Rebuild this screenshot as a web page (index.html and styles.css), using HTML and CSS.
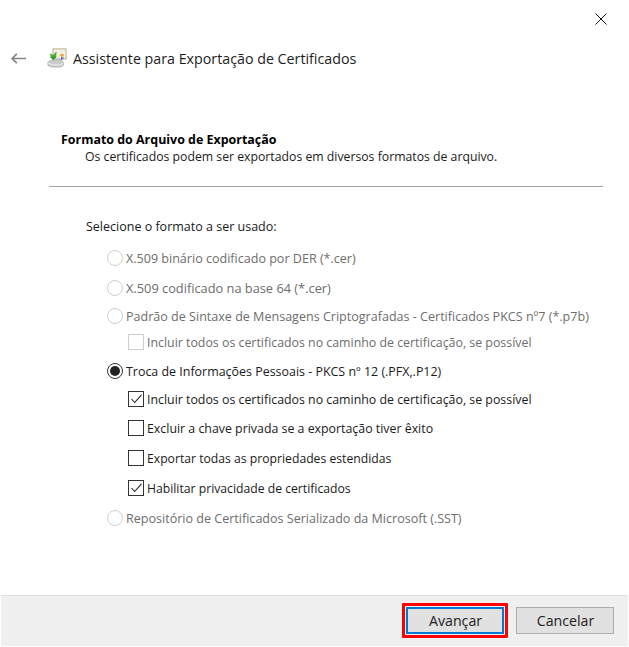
FILE: index.html
```html
<!DOCTYPE html>
<html lang="pt">
<head>
<meta charset="utf-8">
<title>Assistente para Exportação de Certificados</title>
<link rel="stylesheet" href="styles.css">
</head>
<body>
<div class="window">
  <div class="topbar">
    <svg class="close" width="14" height="14" viewBox="0 0 14 14"><path d="M1.5 1.5l11 11M12.5 1.5l-11 11" stroke="#111" stroke-width="1" fill="none"/></svg>
  </div>
  <div class="titlebar">
    <svg class="back" width="15" height="11" viewBox="0 0 15 11"><path d="M15 5.5H1.2M5.8 .8L1.2 5.5l4.6 4.7" stroke="#858585" stroke-width="1.7" fill="none"/></svg>
    <svg class="appicon" width="20" height="20" viewBox="0 0 22 22">
      <rect x="6.5" y="1" width="14.5" height="11" fill="#f4efe4" stroke="#b5a88f"/>
      <circle cx="16.5" cy="8" r="2" fill="#e8a93a"/>
      <path d="M15.5 10h1v3h-1zM17 10h1v3h-1z" fill="#3a62b8"/>
      <path d="M1 15.5L6 13h9l3 2.5v3.5L15 21H5l-4-2z" fill="#c9cdca" stroke="#8e9492" stroke-width=".6"/>
      <path d="M1 16.5l5 2.2h9l3-2.2" fill="none" stroke="#f2f4f3"/>
      <path d="M10.5 3.5L6.5 8 4.5 6 3 7.5 4.5 9 3 10.5h7z" fill="#45b02f"/>
      <path d="M3.5 9.5l3.5 4 3.5-4z" fill="#2f9a24"/>
    </svg>
    <h1 class="title">Assistente para Exportação de Certificados</h1>
  </div>
  <div class="head">
    <h2 class="head-title">Formato do Arquivo de Exportação</h2>
    <p class="head-sub">Os certificados podem ser exportados em diversos formatos de arquivo.</p>
  </div>
  <hr class="divider">
  <main class="content">
    <p class="prompt">Selecione o formato a ser usado:</p>
    <div class="options">
      <div class="row off"><span class="radio"></span><span>X.509 binário codificado por DER (*.cer)</span></div>
      <div class="row off"><span class="radio"></span><span>X.509 codificado na base 64 (*.cer)</span></div>
      <div class="row off"><span class="radio"></span><span>Padrão de Sintaxe de Mensagens Criptografadas - Certificados PKCS nº7 (*.p7b)</span></div>
      <div class="row off sub"><span class="check"></span><span>Incluir todos os certificados no caminho de certificação, se possível</span></div>
      <div class="row"><span class="radio on"></span><span>Troca de Informações Pessoais - PKCS nº 12 (.PFX,.P12)</span></div>
      <div class="row sub"><span class="check"><svg width="11" height="10" viewBox="0 0 11 10"><path d="M.5 5l3.2 3.5L10.5.8" stroke="#222" stroke-width="1.1" fill="none"/></svg></span><span>Incluir todos os certificados no caminho de certificação, se possível</span></div>
      <div class="row sub"><span class="check"></span><span>Excluir a chave privada se a exportação tiver êxito</span></div>
      <div class="row sub"><span class="check"></span><span>Exportar todas as propriedades estendidas</span></div>
      <div class="row sub"><span class="check"><svg width="11" height="10" viewBox="0 0 11 10"><path d="M.5 5l3.2 3.5L10.5.8" stroke="#222" stroke-width="1.1" fill="none"/></svg></span><span>Habilitar privacidade de certificados</span></div>
      <div class="row off"><span class="radio"></span><span>Repositório de Certificados Serializado da Microsoft (.SST)</span></div>
    </div>
  </main>
  <footer class="footer">
    <span class="highlight"><button class="btn primary" type="button">Avançar</button></span>
    <button class="btn" type="button">Cancelar</button>
  </footer>
</div>
</body>
</html>
```
FILE: styles.css
```css
* { box-sizing: border-box; }
html, body { margin: 0; padding: 0; background: #fff; }
body { font-family: "Open Sans", "Noto Sans", "Liberation Sans", sans-serif; color: #111; }
.window { width: 629px; height: 647px; display: flex; flex-direction: column; overflow: hidden; background: #fff; }
.topbar { height: 26px; padding: 12px 21px 0 0; display: flex; justify-content: flex-end; flex: none; }
.close { display: block; }
.titlebar { display: flex; align-items: center; height: 40px; margin-top: 12px; padding-left: 11px; flex: none; }
.back { margin-right: 21px; }
.appicon { margin-right: 6px; }
.title { margin: 0; font-size: 14.25px; font-weight: 400; color: #1c1c1c; white-space: nowrap; }
.head { margin-top: 54px; padding-left: 61px; flex: none; }
.head-title { margin: 0; font-size: 12.45px; line-height: 16px; font-weight: 700; color: #000; }
.head-sub { margin: 1px 0 0 24px; font-size: 12.26px; line-height: 16px; color: #1a1a1a; }
.divider { margin: 21px 26px 0 49px; border: 0; border-top: 1px solid #a3a3a3; height: 0; flex: none; }
.content { padding: 0 0 0 86px; flex: 1; }
.prompt { margin: 32px 0 0; font-size: 12.5px; line-height: 16px; color: #1a1a1a; }
.options { margin-top: 14px; display: flex; flex-direction: column; }
.row { display: flex; align-items: center; height: 18px; margin-left: 21px; font-size: 12.55px; white-space: nowrap; color: #1a1a1a; }
.row + .row { margin-top: 12px; }
.row:nth-child(2) { font-size: 12.8px; }
.row:nth-child(3) { margin-top: 10px; }
.row:nth-child(4) { margin-top: 8px; font-size: 12.36px; }
.row:nth-child(5) { margin-top: 11px; font-size: 12.45px; }
.row:nth-child(6) { margin-top: 10px; font-size: 12.36px; }
.row:nth-child(7) { margin-top: 11px; font-size: 12.36px; }
.row.off { color: #6d6d6d; }
.row.sub { margin-left: 42px; }
.row.sub:nth-child(n+8) { font-size: 12.2px; }
.radio { width: 16px; height: 16px; border: 1px solid #333; border-radius: 50%; margin-right: 3px; flex: none; position: relative; background: #fff; }
.off .radio { border-color: #cfcfcf; }
.radio.on::after { content: ""; position: absolute; left: 2px; top: 2px; width: 10px; height: 10px; border-radius: 50%; background: #222; }
.check { width: 16px; height: 16px; border: 1px solid #333; margin-right: 3px; flex: none; display: flex; align-items: center; justify-content: center; background: #fff; }
.off .check { border-color: #cfcfcf; }
.footer { height: 51px; margin: 0 1px 1px; background: #f0f0f0; border-top: 1px solid #dfdfdf; display: flex; align-items: center; justify-content: flex-end; padding: 0 14px 2px 0; gap: 8px; flex: none; }
.highlight { display: block; padding: 1px; border: 3px solid #f00; border-radius: 1px; }
.btn { display: block; width: 98px; height: 27px; padding: 1px 0 0 1px; background: #e1e1e1; border: 1px solid #adadad; font: inherit; font-size: 14.2px; line-height: 22px; color: #222; }
.btn.primary { border: 2px solid #0078d7; }
```
